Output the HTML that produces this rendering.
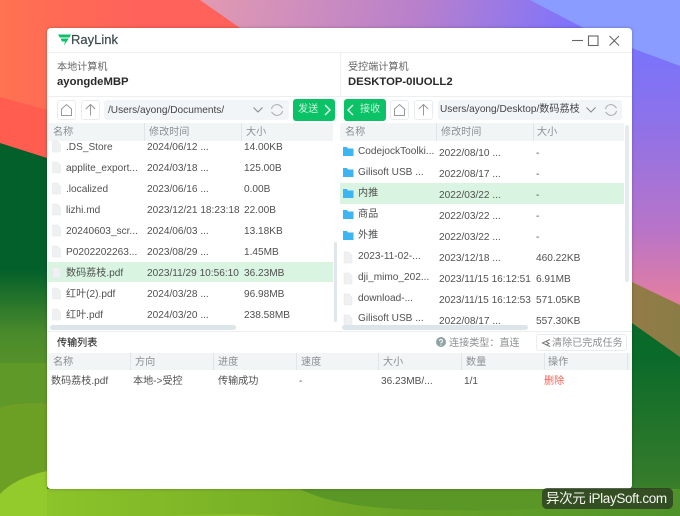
<!DOCTYPE html>
<html><head><meta charset="utf-8"><style>
html,body{margin:0;padding:0;width:680px;height:516px;overflow:hidden;background:#4d8f2a}
*{box-sizing:border-box}
#bg{position:absolute;left:0;top:0}
#w{position:absolute;left:47px;top:28px;width:585px;height:461px;background:#fff;border-radius:4px;box-shadow:0 0 3px rgba(0,0,0,.25);overflow:hidden}
#a{position:absolute;left:0;top:0;width:680px;height:516px;font-family:"Liberation Sans","Noto Sans CJK SC",sans-serif;font-size:10.1px;color:#505050;filter:blur(.25px)}
.t{position:absolute;line-height:14px;white-space:nowrap;margin-top:2px}
.b{position:absolute}
.h{color:#8b8f92}
svg{position:absolute;overflow:visible}
</style></head><body>
<svg id="bg" width="680" height="516" viewBox="0 0 680 516">
<defs>
<linearGradient id="r" x1="0" x2="1"><stop offset="0" stop-color="#ff7252"/><stop offset=".2" stop-color="#ff625a"/><stop offset="1" stop-color="#ff5c60"/></linearGradient>
<linearGradient id="p" x1="0" y1="0" x2="1" y2=".15"><stop offset="0" stop-color="#e29ab0"/><stop offset=".45" stop-color="#b880cc"/><stop offset=".8" stop-color="#7a72ff"/><stop offset="1" stop-color="#7272ff"/></linearGradient>
<linearGradient id="p2" x1="0" y1="0" x2="0" y2="1"><stop offset="0" stop-color="#7574ff"/><stop offset=".3" stop-color="#8c72ea"/><stop offset=".7" stop-color="#b874c8"/><stop offset="1" stop-color="#ea809a"/></linearGradient>
<linearGradient id="g" x1="0" y1="0" x2="0" y2="1"><stop offset="0" stop-color="#04602a"/><stop offset=".5" stop-color="#04602a"/><stop offset=".8" stop-color="#4a8a2c"/><stop offset="1" stop-color="#5a9428"/></linearGradient>
<linearGradient id="gr" x1="0" y1="0" x2="0" y2="1"><stop offset="0" stop-color="#05682a"/><stop offset=".55" stop-color="#0a6a2a"/><stop offset=".9" stop-color="#357c2b"/><stop offset="1" stop-color="#4a8c2a"/></linearGradient>
<linearGradient id="gb" x1="0" x2="1"><stop offset="0" stop-color="#8cc42a"/><stop offset=".5" stop-color="#6fa725"/><stop offset="1" stop-color="#4f912a"/></linearGradient>
<linearGradient id="br" x1="0" x2="1"><stop offset="0" stop-color="#ad7848"/><stop offset="1" stop-color="#8a7c45"/></linearGradient>
</defs>
<rect width="680" height="516" fill="url(#r)"/>
<polygon points="0,97 47,110 300,200 0,200" fill="#ff5d50"/>
<polygon points="200,0 680,0 680,300 450,180 250,35" fill="url(#p)"/>
<rect x="632" y="34" width="48" height="280" fill="url(#p2)"/>
<polygon points="530,0 680,0 680,66 597,35" fill="#8a9cff"/>
<polygon points="500,210 632,282 680,305 680,420 500,420" fill="url(#br)"/>
<polygon points="47,158 300,250 500,300 632,323 680,357 680,516 47,516" fill="url(#gr)"/>
<polygon points="0,143 47,158 47,375 0,375" fill="#04602a"/>
<rect x="0" y="165" width="47" height="210" fill="url(#g)"/>
<path d="M0 363H47V404Q20 402 0 408Z" fill="#5f9a28"/>
<path d="M0 408Q20 402 47 404V471Q15 478 0 494Z" fill="#6ca024"/>
<path d="M0 494Q15 478 47 471V516H0Z" fill="#92cb2b"/>
<rect x="47" y="489" width="633" height="27" fill="url(#gb)"/>
<path d="M300 489Q340 510 440 510Q560 514 680 489Z" fill="#5b9726"/>
<path d="M170 516Q220 512 280 516Z" fill="#86bf2a"/>
</svg>
<div id="w"></div>
<div id="a">
<!-- title bar -->
<div class="b" style="left:48px;top:52px;width:584px;height:1px;background:#eceeef"></div>
<svg style="left:58px;top:34px" width="13" height="12" viewBox="0 0 13 12"><path d="M0 .5H13L11.500 3.500H1.800Z" fill="#0cc06a"/><path d="M2.800 4.500H10.800L6 11.500L7 7.500H3.800Z" fill="#0cc06a"/></svg>
<div class="t" style="left:71px;top:31px;font-size:13px;line-height:18px;color:#3b4a4c;margin-top:0;-webkit-text-stroke:.2px #3b4a4c">RayLink</div>
<svg style="left:570px;top:34px" width="52" height="14" viewBox="0 0 52 14" fill="none" stroke="#666" stroke-width="1.100"><path d="M2 6.500H13"/><rect x="18.500" y="2" width="9.500" height="9.500"/><path d="M39.500 2L49 11.500M49 2L39.500 11.500"/></svg>
<!-- host headers -->
<div class="t" style="left:57px;top:59px;color:#666">本地计算机</div>
<div class="t" style="left:57px;top:73px;font-weight:bold;font-size:11.3px;color:#2a2a2a">ayongdeMBP</div>
<div class="t" style="left:348px;top:59px;color:#666">受控端计算机</div>
<div class="t" style="left:348px;top:73px;font-weight:bold;font-size:11.3px;color:#2a2a2a">DESKTOP-0IUOLL2</div>
<div class="b" style="left:340px;top:52px;width:1px;height:44px;background:#eceeef"></div>
<div class="b" style="left:48px;top:96px;width:584px;height:1px;background:#eceeef"></div>
<!-- left toolbar -->
<div class="b" style="left:57px;top:100px;width:19px;height:20px;border:1px solid #e8ecee;border-radius:3px"></div>
<div class="b" style="left:81px;top:100px;width:19px;height:20px;border:1px solid #e8ecee;border-radius:3px"></div>
<svg style="left:60px;top:103px" width="14" height="14" viewBox="0 0 14 14" fill="none" stroke="#999" stroke-width="1"><path d="M1.500 6L6.500 1.500L11.500 6V12.500H1.500Z"/></svg>
<svg style="left:84px;top:103px" width="14" height="14" viewBox="0 0 14 14" fill="none" stroke="#999" stroke-width="1"><path d="M6.500 12.500V1.500M1.800 6L6.500 1.500L11.200 6"/></svg>
<div class="b" style="left:104px;top:100px;width:185px;height:20px;background:#f1f5f7;border-radius:3px"></div>
<div class="t" style="left:108px;top:102px;color:#444">/Users/ayong/Documents/</div>
<svg style="left:252px;top:106px" width="12" height="8" viewBox="0 0 12 8" fill="none" stroke="#888" stroke-width="1"><path d="M1.500 1.500L6 6L10.500 1.500"/></svg>
<svg style="left:270px;top:103px" width="14" height="14" viewBox="0 0 14 14" fill="none" stroke="#aaa" stroke-width="1"><path d="M1.500 6A5.500 5.500 0 0 1 11 3.500L12.500 5M12.500 8A5.500 5.500 0 0 1 3 10.500L1.500 9"/></svg>
<div class="b" style="left:293px;top:99px;width:42px;height:22px;background:#0bc266;border-radius:3px"></div>
<div class="t" style="left:298px;top:101px;color:#c9f3dc">发送</div>
<svg style="left:323px;top:104px" width="9" height="12" viewBox="0 0 9 12" fill="none" stroke="#e8fbf0" stroke-width="1.400"><path d="M2 1L7 6L2 11"/></svg>
<!-- right toolbar -->
<div class="b" style="left:344px;top:99px;width:42px;height:22px;background:#0bc266;border-radius:3px"></div>
<svg style="left:346px;top:104px" width="9" height="12" viewBox="0 0 9 12" fill="none" stroke="#e8fbf0" stroke-width="1.400"><path d="M7 1L2 6L7 11"/></svg>
<div class="t" style="left:360px;top:101px;color:#c9f3dc">接收</div>
<div class="b" style="left:390px;top:100px;width:19px;height:20px;border:1px solid #e8ecee;border-radius:3px"></div>
<div class="b" style="left:414px;top:100px;width:19px;height:20px;border:1px solid #e8ecee;border-radius:3px"></div>
<svg style="left:393px;top:103px" width="14" height="14" viewBox="0 0 14 14" fill="none" stroke="#999" stroke-width="1"><path d="M1.500 6L6.500 1.500L11.500 6V12.500H1.500Z"/></svg>
<svg style="left:417px;top:103px" width="14" height="14" viewBox="0 0 14 14" fill="none" stroke="#999" stroke-width="1"><path d="M6.500 12.500V1.500M1.800 6L6.500 1.500L11.200 6"/></svg>
<div class="b" style="left:438px;top:100px;width:184px;height:20px;background:#f1f5f7;border-radius:3px"></div>
<div class="t" style="left:440px;top:101px;color:#444">Users/ayong/Desktop/数码荔枝</div>
<svg style="left:585px;top:106px" width="12" height="8" viewBox="0 0 12 8" fill="none" stroke="#888" stroke-width="1"><path d="M1.500 1.500L6 6L10.500 1.500"/></svg>
<svg style="left:604px;top:103px" width="14" height="14" viewBox="0 0 14 14" fill="none" stroke="#aaa" stroke-width="1"><path d="M1.500 6A5.500 5.500 0 0 1 11 3.500L12.500 5M12.500 8A5.500 5.500 0 0 1 3 10.500L1.500 9"/></svg>
<!-- left table head -->
<div class="b" style="left:48px;top:123px;width:285px;height:18px;background:#f1f5f6"></div>
<div class="b" style="left:144px;top:123px;width:1px;height:18px;background:#e0e5e7"></div>
<div class="b" style="left:241px;top:123px;width:1px;height:18px;background:#e0e5e7"></div>
<div class="t h" style="left:53px;top:124px">名称</div><div class="t h" style="left:149px;top:124px">修改时间</div><div class="t h" style="left:246px;top:124px">大小</div>
<!-- right table head -->
<div class="b" style="left:340px;top:123px;width:284px;height:18px;background:#f1f5f6"></div>
<div class="b" style="left:436px;top:123px;width:1px;height:18px;background:#e0e5e7"></div>
<div class="b" style="left:533px;top:123px;width:1px;height:18px;background:#e0e5e7"></div>
<div class="t h" style="left:345px;top:124px">名称</div><div class="t h" style="left:441px;top:124px">修改时间</div><div class="t h" style="left:537px;top:124px">大小</div>
<!-- selected rows -->
<div class="b" style="left:48px;top:262px;width:285px;height:20px;background:#d9f4e0"></div>
<div class="b" style="left:340px;top:183px;width:284px;height:21px;background:#d9f4e0"></div>
<!-- left rows -->
<div class="t" style="left:66px;top:139px">.DS_Store</div><div class="t" style="left:147px;top:139px">2024/06/12 ...</div><div class="t" style="left:244px;top:139px">14.00KB</div>
<div class="t" style="left:66px;top:160px">applite_export...</div><div class="t" style="left:147px;top:160px">2024/03/18 ...</div><div class="t" style="left:244px;top:160px">125.00B</div>
<div class="t" style="left:66px;top:181px">.localized</div><div class="t" style="left:147px;top:181px">2023/06/16 ...</div><div class="t" style="left:244px;top:181px">0.00B</div>
<div class="t" style="left:66px;top:202px">lizhi.md</div><div class="t" style="left:147px;top:202px">2023/12/21 18:23:18</div><div class="t" style="left:244px;top:202px">22.00B</div>
<div class="t" style="left:66px;top:223px">20240603_scr...</div><div class="t" style="left:147px;top:223px">2024/06/03 ...</div><div class="t" style="left:244px;top:223px">13.18KB</div>
<div class="t" style="left:66px;top:244px">P0202202263...</div><div class="t" style="left:147px;top:244px">2023/08/29 ...</div><div class="t" style="left:244px;top:244px">1.45MB</div>
<div class="t" style="left:66px;top:265px">数码荔枝.pdf</div><div class="t" style="left:147px;top:265px">2023/11/29 10:56:10</div><div class="t" style="left:244px;top:265px">36.23MB</div>
<div class="t" style="left:66px;top:286px">红叶(2).pdf</div><div class="t" style="left:147px;top:286px">2024/03/28 ...</div><div class="t" style="left:244px;top:286px">96.98MB</div>
<div class="t" style="left:66px;top:307px">红叶.pdf</div><div class="t" style="left:147px;top:307px">2024/03/20 ...</div><div class="t" style="left:244px;top:307px">238.58MB</div>
<!-- left file icons -->
<svg style="left:52px;top:0" width="9" height="330" viewBox="0 0 9 330" fill="#eef0f1" stroke="#e4e7e8" stroke-width=".5">
<path d="M.5 141H5.500L8.500 144V152H.5Z"/>
<path d="M.5 162H5.500L8.500 165V173H.5Z"/><path d="M.5 183H5.500L8.500 186V194H.5Z"/><path d="M.5 204H5.500L8.500 207V215H.5Z"/><path d="M.5 225H5.500L8.500 228V236H.5Z"/><path d="M.5 246H5.500L8.500 249V257H.5Z"/><path d="M.5 267H5.500L8.500 270V278H.5Z"/><path d="M.5 288H5.500L8.500 291V299H.5Z"/><path d="M.5 309H5.500L8.500 312V320H.5Z"/>
</svg>
<!-- right rows -->
<div class="t" style="left:358px;top:143px">CodejockToolki...</div><div class="t" style="left:439px;top:145px">2022/08/10 ...</div><div class="t" style="left:536px;top:145px">-</div>
<div class="t" style="left:358px;top:164px">Gilisoft USB ...</div><div class="t" style="left:439px;top:166px">2022/08/17 ...</div><div class="t" style="left:536px;top:166px">-</div>
<div class="t" style="left:358px;top:185px">内推</div><div class="t" style="left:439px;top:187px">2022/03/22 ...</div><div class="t" style="left:536px;top:187px">-</div>
<div class="t" style="left:358px;top:206px">商品</div><div class="t" style="left:439px;top:208px">2022/03/22 ...</div><div class="t" style="left:536px;top:208px">-</div>
<div class="t" style="left:358px;top:227px">外推</div><div class="t" style="left:439px;top:229px">2022/03/22 ...</div><div class="t" style="left:536px;top:229px">-</div>
<div class="t" style="left:358px;top:248px">2023-11-02-...</div><div class="t" style="left:439px;top:250px">2023/12/18 ...</div><div class="t" style="left:536px;top:250px">460.22KB</div>
<div class="t" style="left:358px;top:269px">dji_mimo_202...</div><div class="t" style="left:439px;top:271px">2023/11/15 16:12:51</div><div class="t" style="left:536px;top:271px">6.91MB</div>
<div class="t" style="left:358px;top:290px">download-...</div><div class="t" style="left:439px;top:292px">2023/11/15 16:12:53</div><div class="t" style="left:536px;top:292px">571.05KB</div>
<div class="t" style="left:358px;top:310px">Gilisoft USB ...</div><div class="t" style="left:439px;top:313px">2022/08/17 ...</div><div class="t" style="left:536px;top:313px">557.30KB</div>
<!-- right icons -->
<svg style="left:343px;top:0" width="11" height="330" viewBox="0 0 11 330" fill="#3db5f2">
<path d="M0 147H4L5 148.500H10.500V156H0Z"/><path d="M0 168H4L5 169.500H10.500V177H0Z"/><path d="M0 189H4L5 190.500H10.500V198H0Z"/><path d="M0 210H4L5 211.500H10.500V219H0Z"/><path d="M0 231H4L5 232.500H10.500V240H0Z"/>
<g fill="#eef0f1" stroke="#e4e7e8" stroke-width=".5"><path d="M1 252H6L9 255V263H1Z"/><path d="M1 273H6L9 276V284H1Z"/><path d="M1 294H6L9 297V305H1Z"/><path d="M1 315H6L9 318V326H1Z"/></g>
</svg>
<!-- scrollbars -->
<div class="b" style="left:334px;top:242px;width:3px;height:80px;background:#dfe7ea;border-radius:2px"></div>
<div class="b" style="left:50px;top:325px;width:186px;height:5px;background:#dbe5ea;border-radius:3px"></div>
<div class="b" style="left:625px;top:125px;width:4px;height:157px;background:#e3ebee;border-radius:2px"></div>
<div class="b" style="left:342px;top:325px;width:186px;height:5px;background:#dbe5ea;border-radius:3px"></div>
<div class="b" style="left:48px;top:331px;width:584px;height:1px;background:#eceeef"></div>
<!-- transfer list -->
<div class="t" style="left:57px;top:335px;color:#333;-webkit-text-stroke:.15px #333">传输列表</div>
<svg style="left:436px;top:337px" width="10" height="10" viewBox="0 0 10 10"><circle cx="5" cy="5" r="5" fill="#8fa3a3"/><path d="M3.500 4A1.500 1.500 0 1 1 5 5.500V6.500" stroke="#fff" fill="none" stroke-width=".9"/><circle cx="5" cy="8" r=".6" fill="#fff"/></svg>
<div class="t h" style="left:449px;top:335px">连接类型：直连</div>
<div class="b" style="left:536px;top:334px;width:91px;height:17px;border:1px solid #e8ecee;border-radius:3px"></div>
<svg style="left:541px;top:338px" width="10" height="10" viewBox="0 0 10 10" fill="none" stroke="#777" stroke-width="1"><path d="M9 1.500L1.500 5L9 8.500"/><path d="M5 3.500L8 5.500L5 7" /></svg>
<div class="t h" style="left:552px;top:335px">清除已完成任务</div>
<div class="b" style="left:48px;top:353px;width:584px;height:17px;background:#f1f5f6"></div>
<div class="b" style="left:130px;top:353px;width:1px;height:17px;background:#e0e5e7"></div>
<div class="b" style="left:213px;top:353px;width:1px;height:17px;background:#e0e5e7"></div>
<div class="b" style="left:296px;top:353px;width:1px;height:17px;background:#e0e5e7"></div>
<div class="b" style="left:378px;top:353px;width:1px;height:17px;background:#e0e5e7"></div>
<div class="b" style="left:461px;top:353px;width:1px;height:17px;background:#e0e5e7"></div>
<div class="b" style="left:544px;top:353px;width:1px;height:17px;background:#e0e5e7"></div>
<div class="b" style="left:627px;top:353px;width:1px;height:17px;background:#e0e5e7"></div>
<div class="t h" style="left:53px;top:354px">名称</div><div class="t h" style="left:135px;top:354px">方向</div><div class="t h" style="left:218px;top:354px">进度</div><div class="t h" style="left:301px;top:354px">速度</div><div class="t h" style="left:383px;top:354px">大小</div><div class="t h" style="left:466px;top:354px">数量</div><div class="t h" style="left:548px;top:354px">操作</div>
<div class="t" style="left:51px;top:373px">数码荔枝.pdf</div><div class="t" style="left:133px;top:373px">本地-&gt;受控</div><div class="t" style="left:218px;top:373px">传输成功</div><div class="t" style="left:299px;top:373px">-</div><div class="t" style="left:381px;top:373px">36.23MB/...</div><div class="t" style="left:464px;top:373px">1/1</div><div class="t" style="left:544px;top:373px;color:#f5635b">删除</div>
</div>
<!-- watermark -->
<div class="b" style="left:542px;top:488px;width:131px;height:21px;background:rgba(42,58,34,.78);border-radius:5px"></div>
<div class="t" style="left:546px;top:490px;margin-top:0;line-height:17px;font-family:'Liberation Sans','Noto Sans CJK SC',sans-serif;font-size:13.5px;color:#f4f7ee;letter-spacing:-.35px">异次元 iPlaySoft.com</div>
</body></html>
